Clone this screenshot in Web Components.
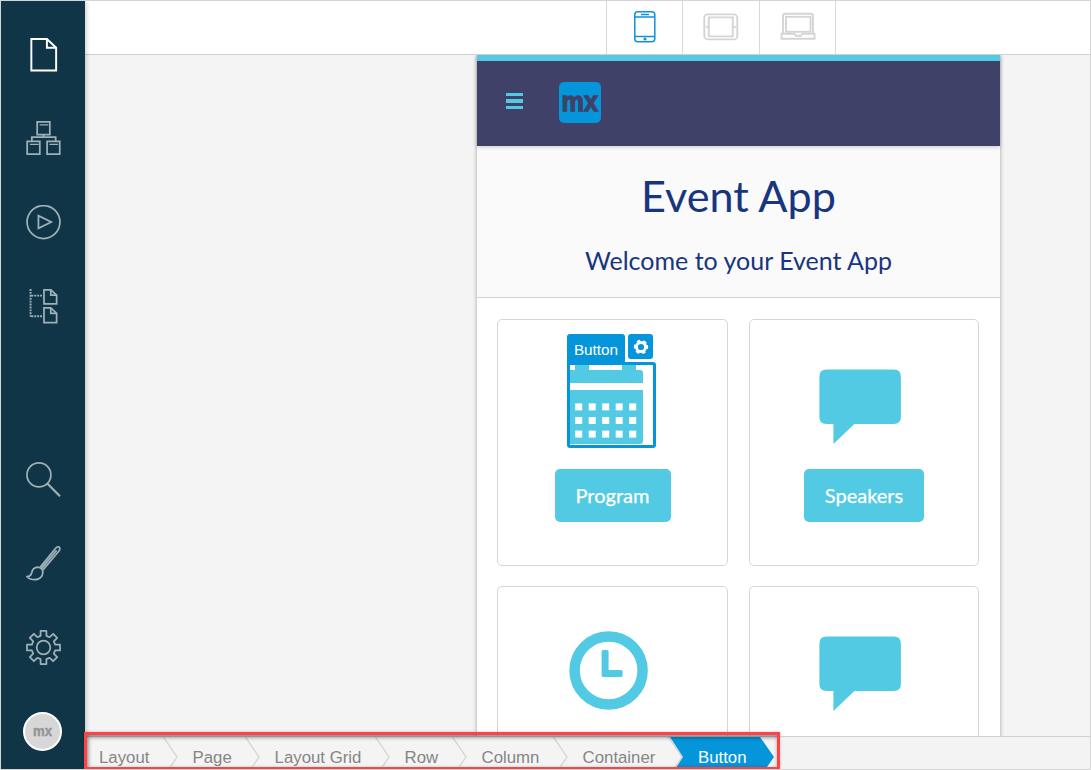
<!DOCTYPE html>
<html lang="en">
<head>
<meta charset="utf-8">
<title>Event App editor</title>
<style>
html,body{margin:0;height:100%;overflow:hidden}
body{font-family:"Liberation Sans",Arial,sans-serif}
</style>
</head>
<body>
<app-shell>
  <side-bar slot="side"></side-bar>
  <device-bar slot="devices"></device-bar>
  <phone-page slot="page">
    <event-card slot="card" icon="calendar" label="Program"></event-card>
    <event-card slot="card" icon="bubble" label="Speakers"></event-card>
    <event-card slot="card" icon="clock"></event-card>
    <event-card slot="card" icon="bubble"></event-card>
  </phone-page>
  <crumb-bar slot="crumbs">
    <crumb-item style="width:93px">Layout</crumb-item>
    <crumb-item style="width:82px">Page</crumb-item>
    <crumb-item style="width:130px">Layout Grid</crumb-item>
    <crumb-item style="width:77px">Row</crumb-item>
    <crumb-item style="width:101px">Column</crumb-item>
    <crumb-item style="width:115px">Container</crumb-item>
    <crumb-item style="width:91px" active>Button</crumb-item>
  </crumb-bar>
</app-shell>
<script>
function define(name, html) {
  customElements.define(name, class extends HTMLElement {
    constructor() {
      super();
      this.attachShadow({mode: 'open'}).innerHTML = typeof html === 'function' ? html(this) : html;
    }
  });
}

define('app-shell', `
<style>
:host{display:grid;box-sizing:border-box;width:1091px;height:770px;border:1px solid #d5d5d5;
 grid-template-columns:84px minmax(0,1fr);grid-template-rows:54px 681px 33px;background:#f4f4f4;overflow:hidden}
.side{grid-row:1/4;z-index:2;box-shadow:1px 0 5px rgba(0,0,0,.22)}
.top{grid-column:2;grid-row:1}
.canvas{grid-column:2;grid-row:2;overflow:hidden;display:flex;padding-left:392px}
.crumbs{grid-column:2;grid-row:3;z-index:3}
</style>
<div class="side"><slot name="side"></slot></div>
<div class="top"><slot name="devices"></slot></div>
<div class="canvas"><slot name="page"></slot></div>
<div class="crumbs"><slot name="crumbs"></slot></div>`);

define('side-bar', `
<style>
:host{display:flex;flex-direction:column;align-items:center;box-sizing:border-box;height:768px;background:#0f3547;padding:36px 0 0 0}
.group{display:flex;flex-direction:column;gap:48px}
.tools{margin:137px 0 46px}
svg{display:block;width:35px;height:35px;margin-bottom:1px;fill:none;stroke:#9fb0b7;stroke-width:1.800}
.on{stroke:#fff;stroke-width:2}
.avatar{width:39px;height:39px;box-sizing:border-box;border:2px solid #fff;border-radius:50%;background:#d7d7d7;margin-right:1px}
.avatar svg{width:35px;height:35px;margin:0;stroke:#959595;stroke-width:.5;fill:#959595}
text{font:bold 15.500px "Liberation Sans",sans-serif}
</style>
<div class="group">
<svg class="on" viewBox="0 0 36 36"><path d="M5.500 2H21.500L31 11V34.500H5.500z"/><path d="M21.500 2v9h9.500"/></svg>
<svg viewBox="0 0 36 36"><path d="M11.500 1h13v13h-13zM1.200 21h13v13h-13zM21.700 21h13v13h-13zM18 14v2.500M6 21v-4.500h24.500V21"/><path d="M14 4h9M4 24h9M24 24h9" stroke-width="1.200"/></svg>
<svg viewBox="0 0 36 36"><circle cx="18" cy="17.600" r="16.900"/><path d="M12.800 11v13L26 17.500z"/></svg>
<svg viewBox="0 0 36 36"><path d="M18.500 .8h7l6 5.500v9h-13zM18.500 19.500h7l6 5.500v9.500h-13z"/><path d="M25.500 1v5.300h6M25.500 19.500v5.500h6"/><path d="M4.700 0v28.500M5.500 6.800h12M5.500 28h12" stroke-width="2" stroke-dasharray="2 1"/></svg>
</div>
<div class="group tools">
<svg viewBox="0 0 36 36"><circle cx="13.300" cy="13.300" r="12.300"/><path d="M21.900 22.200L35 35.300" stroke-width="2.200"/></svg>
<svg viewBox="0 0 36 36"><path d="M14.500 22L30 2.800Q32 .3 34.300 1.200Q35.600 3.300 33.500 5.700L17.500 24.500M16.300 22.800L31.500 4.500"/><path d="M1 31.500Q5 31.300 6 27Q7 22.200 12 21.700Q17.500 22.300 17.300 27.500C16.800 34 10 35.800 4.500 33.900Q2 33 1 31.500z"/></svg>
<svg viewBox="0 0 36 36"><circle cx="18" cy="18" r="7"/><path stroke-linejoin="round" d="M15 1h6v5l3.300 1.400 3.600-3.500 4.200 4.200-3.500 3.600L30 15h5v6h-5l-1.400 3.300 3.500 3.600-4.200 4.200-3.600-3.500L21 30v5h-6v-5l-3.300-1.400-3.600 3.500-4.200-4.200 3.500-3.600L6 21H1v-6h5l1.400-3.300-3.500-3.600 4.200-4.200 3.600 3.500L15 6z"/></svg>
</div>
<div class="avatar"><svg viewBox="0 0 35 35"><text x="8" y="22.300" textLength="19" lengthAdjust="spacingAndGlyphs">mx</text></svg></div>`);

define('device-bar', `
<style>
:host{display:flex;box-sizing:border-box;height:54px;background:#fff;border-bottom:1px solid #d0d0d0;padding-left:521px}
div{display:flex;align-items:center;justify-content:center;box-sizing:border-box;width:76px;border-left:1px solid #d9d9d9;padding-bottom:2px}
.tab{width:77px}.last{width:77px;border-right:1px solid #d9d9d9}
svg{display:block;width:36px;height:36px;fill:none;stroke:#d5d5d5;stroke-width:1.900}
.on svg{stroke:#0d93dc;stroke-width:1.500}
</style>
<div class="on"><svg viewBox="0 0 36 36"><rect x="7.800" y="2.800" width="20" height="30" rx="3"/><path d="M8 8h20M8 27.500h20M14 5.600h8"/><circle cx="18" cy="30" r=".8"/></svg></div>
<div class="tab"><svg viewBox="0 0 36 36"><g transform="translate(-.2 -.6)"><rect x="1.500" y="6" width="33" height="25" rx="3.500"/><path d="M6 9h24v19H6zM3 18.500h2M31 18.500h3"/></g></svg></div>
<div class="last"><svg viewBox="0 0 36 36"><g transform="translate(0 -.7)"><path d="M3 25V8q0-2.500 2.500-2.500h25Q33 5.500 33 8v17M1.500 25.500h13l1.500 2h5l1.500-2h12v5h-33z"/><rect x="6" y="8.500" width="24.500" height="15"/></g></svg></div>`);

define('phone-page', `
<style>
:host{display:block;width:523px;height:740px;background:#fff;box-shadow:0 0 4px rgba(0,0,0,.35);font-family:Lato,sans-serif;flex:none}
header{display:flex;align-items:center;box-sizing:border-box;height:91px;border-top:6px solid #52cae4;background:#3f4168;padding-left:29px;box-shadow:0 1px 4px rgba(0,0,0,.2);position:relative}
.menu{display:grid;grid-template-rows:3px 4px 3px;gap:3px;width:17px;margin:-5px 36px 0 0}
.menu i{background:#52cae4}
.logo{width:42px;height:41px;background:#0595db;border-radius:5px;margin-top:-2px}
.logo svg{display:block;overflow:visible}
text{font:bold 28px "Liberation Sans",sans-serif;fill:#3f4168;stroke:#3f4168;stroke-width:1.300}
.hero{box-sizing:border-box;height:152px;background:#fafafa;border-bottom:1px solid #d2d2d2;text-align:center;color:#18357f;padding-top:21px}
h1{font-size:43.200px;line-height:56px;font-weight:400;margin:0}
p{font-size:25px;line-height:32px;margin:21px 0 0}
.grid{display:grid;grid-template-columns:231px 230px;grid-auto-rows:247px;gap:20px 21px;padding:21px 20px}
</style>
<header><div class="menu"><i></i><i></i><i></i></div><div class="logo"><svg width="42" height="41"><text x="2.500" y="28.500" textLength="36.500" lengthAdjust="spacingAndGlyphs">mx</text></svg></div></header>
<div class="hero"><h1>Event App</h1><p>Welcome to your Event App</p></div>
<div class="grid"><slot name="card"></slot></div>`);

const squares = [0, 1, 2].map(r => [0, 1, 2, 3, 4].map(c =>
  `<rect x="${5.2 + c * 13.5}" y="${38.4 + r * 13.6}" width="7" height="7" fill="#fff"/>`).join('')).join('');
const art = {
  calendar: '<selected-widget></selected-widget>',
  bubble: '<svg width="82" height="76"><path transform="translate(.4 .6)" d="M7 0h67.500q7 0 7 7v40.500q0 7-7 7H35L14 74.500V54.500H7q-7 0-7-7V7q0-7 7-7z"/></svg>',
  clock: '<svg width="80" height="80"><g transform="translate(.6 .4)"><circle cx="40" cy="40" r="34" fill="none" stroke="#52cae4" stroke-width="10.500"/><path d="M34.500 19.500h4q1.500 0 1.500 1.500v18.500h12.500q1.500 0 1.500 1.500v4q0 1.500-1.500 1.500h-18q-1.500 0-1.500-1.500V21q0-1.500 1.500-1.500z"/></g></svg>'
};

define('selected-widget', `
<style>
:host{display:block;position:relative;width:89px;height:86px;box-sizing:border-box;border:3px solid #0595db;border-radius:3px;background:#fff;font-family:"Liberation Sans",Arial,sans-serif}
.tag,.gear{position:absolute;top:-31px;background:#0595db}
.tag{left:-3px;width:58px;height:31px;line-height:31px;font-size:15.300px;color:#fff;text-align:center;border-radius:3px 3px 0 0}
.gear{left:58px;width:25px;height:25px;border-radius:3px}
svg{display:block}
</style>
<svg width="83" height="80"><path fill="#52cae4" d="M0 5h5V0h14v5h33V0h14v5h4q3 0 3 3v10H0zM0 25h73v51q0 3-3 3H0z"/>${squares}</svg>
<div class="tag">Button</div>
<div class="gear"><svg width="25" height="25" fill="none" stroke="#fff"><circle cx="13" cy="13" r="4.600" stroke-width="3"/><circle cx="13" cy="13" r="6.300" stroke-width="1.800" stroke-dasharray="3.600 2.997" transform="rotate(-16.400 13 13)"/></svg></div>`);

define('event-card', el => {
  const icon = el.getAttribute('icon'), label = el.getAttribute('label') || '\u00a0';
  return `
<style>
:host{display:flex;flex-direction:column;align-items:center;box-sizing:border-box;border:1px solid #d6d6d6;border-radius:5px;background:#fff}
.art{height:149px;box-sizing:border-box}
.calendar{padding:42px 2px 0 0}.bubble{padding:49px 8px 0 0}.clock{padding:43px 8px 0 0}
.art svg{display:block;overflow:visible;fill:#52cae4}
.clock svg{margin-left:-.5px}
button{height:53px;width:${icon === 'calendar' ? 116 : 120}px;padding:0 0 2px;border:0;border-radius:5px;background:#52cae4;color:#fff;font:20px Lato,sans-serif;-webkit-text-stroke:.25px #fff}
</style>
<div class="art ${icon}">${art[icon]}</div>${el.hasAttribute('label') ? `<button>${label}</button>` : ''}`;
});

define('crumb-bar', `
<style>
:host{display:flex;position:relative;box-sizing:border-box;height:33px;border-top:1px solid #d0d0d0;background:#f3f3f3;overflow:visible}
nav{display:flex;width:692px;height:32px;overflow:hidden;background:#f4f4f4}
.mark{position:absolute;left:-1px;top:-5px;box-sizing:border-box;width:696px;height:38px;border:3px solid #ff4344;box-shadow:inset 1px 2px 4px rgba(0,0,0,.5),0 0 3px rgba(0,0,0,.2)}
</style>
<nav><slot></slot></nav><div class="mark"></div>`);

define('crumb-item', `
<style>
:host{display:flex;flex:none;justify-content:space-between;box-sizing:border-box;height:40px;padding-left:14px;font-size:16.800px;line-height:41px;color:#858585;white-space:nowrap}
:host(:not(:first-child)){padding-left:14.600px}
:host([active]){color:#fff;background:#0595db;width:104px!important;margin-left:-13px;padding-left:28px!important;clip-path:polygon(0 0,90px 0,104px 20px,90px 40px,0 40px,13px 20px)}
:host([active]) svg{display:none}
svg{flex:none;width:15px;height:40px;fill:none;stroke:#d4d4d4;stroke-width:1.300}
</style>
<slot></slot><svg><path d="M.5 0L14 20 .5 40"/></svg>`);
</script>
</body>
</html>
